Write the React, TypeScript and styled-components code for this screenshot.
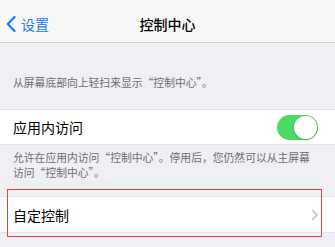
import React from 'react'
import styled, { createGlobalStyle } from 'styled-components'

const GlobalStyle = createGlobalStyle`
  body {
    margin: 0;
    background: #efeff4;
    font-family: 'Noto Sans CJK SC', 'Noto Sans', sans-serif;
  }
`

const Page = styled.div`
  position: relative;
  width: 335px;
  height: 247px;
  overflow: hidden;
  background: #efeff4;
`

// only the bottom edge of the status bar is visible in the crop
const StatusBar = styled.div`
  height: 20px;
  margin-top: -17px;
  padding: 0 4px;
  display: flex;
  align-items: center;
  justify-content: space-between;
  font-size: 12px;
  color: #000;
  background: #f7f7f7;

  .left {
    display: flex;
    align-items: center;
    gap: 4px;
  }
  .right {
    display: flex;
    align-items: center;
    gap: 6px;
  }
  .battery {
    width: 22px;
    height: 9px;
    border: 1px solid #999;
    border-radius: 2px;
  }
`

const NavBar = styled.div`
  height: 40px;
  padding-top: 3px;
  box-sizing: border-box;
  display: grid;
  grid-template-columns: 1fr auto 1fr;
  align-items: center;
  background: #f7f7f7;
  border-bottom: 1px solid #cfcfd3;
`

const Back = styled.div`
  display: flex;
  align-items: center;
  gap: 5px;
  padding-left: 6px;
  color: #1a7cf4;
  font-size: 14px;
`

const Title = styled.div`
  font-size: 14px;
  font-weight: 500;
  color: #000;
`

const Note = styled.div<{ $top: number; $bottom: number }>`
  padding: ${(p) => p.$top}px 13px ${(p) => p.$bottom}px;
  font-size: 10.8px;
  line-height: 15px;
  color: #6d6d72;
`

const Row = styled.div<{ $height: number }>`
  height: ${(p) => p.$height}px;
  box-sizing: border-box;
  display: flex;
  align-items: center;
  justify-content: space-between;
  padding: 0 17px 0 13px;
  background: #fff;
  border-top: 1px solid #e4e4e8;
  border-bottom: 1px solid #e4e4e8;
  font-size: 14px;
  color: #000;
`

const Toggle = styled.div`
  position: relative;
  width: 41px;
  height: 25px;
  border-radius: 13px;
  background: #4cd964;

  &::after {
    content: '';
    position: absolute;
    top: 1px;
    right: 1px;
    width: 23px;
    height: 23px;
    border-radius: 50%;
    background: #fff;
    box-shadow: 0 1px 2px rgba(0, 0, 0, 0.25);
  }
`

const Highlight = styled.div`
  position: absolute;
  left: 7px;
  top: 189px;
  width: 315px;
  height: 48px;
  box-sizing: border-box;
  border: 1.5px solid #e8403f;
`

const App = () => (
  <>
    <GlobalStyle />
    <Page>
      <StatusBar>
        <div className="left">
          <span>●●●●○</span>
          <span>中国移动</span>
          <span>令</span>
        </div>
        <span>16:55</span>
        <div className="right">
          <span>◔</span>
          <span>✱</span>
          <span>100%</span>
          <span className="battery" />
        </div>
      </StatusBar>
      <NavBar>
        <Back>
          <svg width="10" height="16" viewBox="0 0 10 16">
            <path
              d="M8.5 1 L1.8 8 L8.5 15"
              fill="none"
              stroke="#1a7cf4"
              strokeWidth="2.2"
              strokeLinecap="round"
              strokeLinejoin="round"
            />
          </svg>
          <span>设置</span>
        </Back>
        <Title>控制中心</Title>
        <div />
      </NavBar>
      <Note $top={32} $bottom={19}>
        从屏幕底部向上轻扫来显示“控制中心”。
      </Note>
      <Row $height={36}>
        <span>应用内访问</span>
        <Toggle />
      </Row>
      <Note $top={5} $bottom={16}>
        允许在应用内访问“控制中心”。停用后，您仍然可以从主屏幕
        <br />
        访问“控制中心”。
      </Note>
      <Row $height={37}>
        <span>自定控制</span>
        <svg width="7" height="12" viewBox="0 0 7 12">
          <path
            d="M1 1 L6 6 L1 11"
            fill="none"
            stroke="#c7c7cc"
            strokeWidth="1.6"
          />
        </svg>
      </Row>
      <Highlight />
    </Page>
  </>
)

export default App
